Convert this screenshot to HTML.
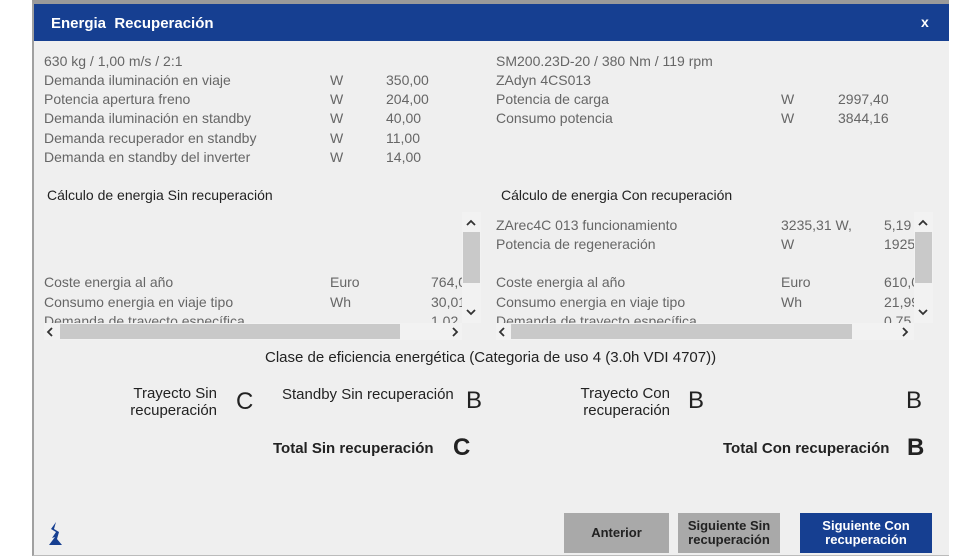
<!DOCTYPE html>
<html><head><meta charset="utf-8"><style>
*{margin:0;padding:0;box-sizing:border-box}
body{width:980px;height:560px;background:#fff;position:relative;overflow:hidden;font-family:"Liberation Sans",sans-serif;font-size:14px;color:#666}
.dlg{position:absolute;left:32px;top:0;width:917px;height:556px;background:#efefef;border-left:2px solid #a0a0a0;border-top:4px solid #9a9a9a;border-bottom:1px solid #bbb}
.hdr{position:absolute;left:34px;top:4px;width:915px;height:37px;background:#163f91;color:#fff;font-weight:bold;font-size:15px}
.t{position:absolute;white-space:nowrap;line-height:16px}
.d{color:#222}
.c{font-size:15px;line-height:17px}
.sb{position:absolute;background:#f2f2f2}
.th{position:absolute;background:#c9c9c9}
.ar{position:absolute}
.btn{position:absolute;display:flex;align-items:center;justify-content:center;text-align:center;font-weight:bold;font-size:13px;line-height:14px;color:#222;background:#a9a9a9}
.clip{position:absolute;overflow:hidden}
</style></head><body>
<div class="dlg"></div>
<div class="hdr"><span class="t" style="left:17px;top:12px">Energia&nbsp; Recuperación</span><span class="t" style="left:887px;top:10px;font-size:14px">x</span></div>

<div class="t" style="left:44px;top:53px">630 kg / 1,00 m/s / 2:1</div>
<div class="t" style="left:44px;top:72px">Demanda iluminación en viaje</div><div class="t" style="left:330px;top:72px">W</div><div class="t" style="left:386px;top:72px">350,00</div>
<div class="t" style="left:44px;top:91px">Potencia apertura freno</div><div class="t" style="left:330px;top:91px">W</div><div class="t" style="left:386px;top:91px">204,00</div>
<div class="t" style="left:44px;top:110px">Demanda iluminación en standby</div><div class="t" style="left:330px;top:110px">W</div><div class="t" style="left:386px;top:110px">40,00</div>
<div class="t" style="left:44px;top:130px">Demanda recuperador en standby</div><div class="t" style="left:330px;top:130px">W</div><div class="t" style="left:386px;top:130px">11,00</div>
<div class="t" style="left:44px;top:149px">Demanda en standby del inverter</div><div class="t" style="left:330px;top:149px">W</div><div class="t" style="left:386px;top:149px">14,00</div>

<div class="t" style="left:496px;top:53px">SM200.23D-20 / 380 Nm / 119 rpm</div>
<div class="t" style="left:496px;top:72px">ZAdyn 4CS013</div>
<div class="t" style="left:496px;top:91px">Potencia de carga</div><div class="t" style="left:781px;top:91px">W</div><div class="t" style="left:838px;top:91px">2997,40</div>
<div class="t" style="left:496px;top:110px">Consumo potencia</div><div class="t" style="left:781px;top:110px">W</div><div class="t" style="left:838px;top:110px">3844,16</div>

<div class="t d" style="left:47px;top:187px">Cálculo de energia Sin recuperación</div>
<div class="t d" style="left:501px;top:187px">Cálculo de energia Con recuperación</div>

<!-- left box -->
<div class="clip" style="left:44px;top:212px;width:418px;height:111px">
<div class="t" style="left:0;top:62px">Coste energia al año</div><div class="t" style="left:286px;top:62px">Euro</div><div class="t" style="left:387px;top:62px">764,05</div>
<div class="t" style="left:0;top:82px">Consumo energia en viaje tipo</div><div class="t" style="left:286px;top:82px">Wh</div><div class="t" style="left:387px;top:82px">30,01</div>
<div class="t" style="left:0;top:101px">Demanda de trayecto específica</div><div class="t" style="left:387px;top:101px">1,02</div>
</div>
<div class="sb" style="left:462px;top:212px;width:19px;height:111px"></div>
<div class="th" style="left:463px;top:232px;width:17px;height:51px"></div>
<svg class="ar" style="left:466px;top:219px" width="10" height="8"><path d="M1 6 L5 2 L9 6" stroke="#333" stroke-width="1.8" fill="none"/></svg>
<svg class="ar" style="left:466px;top:308px" width="10" height="8"><path d="M1 2 L5 6 L9 2" stroke="#333" stroke-width="1.8" fill="none"/></svg>
<div class="sb" style="left:44px;top:323px;width:418px;height:17px"></div>
<div class="th" style="left:60px;top:324px;width:340px;height:15px"></div>
<svg class="ar" style="left:46px;top:327px" width="8" height="10"><path d="M6 1 L2 5 L6 9" stroke="#333" stroke-width="1.8" fill="none"/></svg>
<svg class="ar" style="left:451px;top:327px" width="8" height="10"><path d="M2 1 L6 5 L2 9" stroke="#333" stroke-width="1.8" fill="none"/></svg>

<!-- right box -->
<div class="clip" style="left:496px;top:212px;width:418px;height:111px">
<div class="t" style="left:0;top:5px">ZArec4C 013 funcionamiento</div><div class="t" style="left:285px;top:5px">3235,31 W,</div><div class="t" style="left:388px;top:5px">5,19 kWh</div>
<div class="t" style="left:0;top:24px">Potencia de regeneración</div><div class="t" style="left:285px;top:24px">W</div><div class="t" style="left:388px;top:24px">1925,00</div>
<div class="t" style="left:0;top:62px">Coste energia al año</div><div class="t" style="left:285px;top:62px">Euro</div><div class="t" style="left:388px;top:62px">610,05</div>
<div class="t" style="left:0;top:82px">Consumo energia en viaje tipo</div><div class="t" style="left:285px;top:82px">Wh</div><div class="t" style="left:388px;top:82px">21,99</div>
<div class="t" style="left:0;top:101px">Demanda de trayecto específica</div><div class="t" style="left:388px;top:101px">0,75</div>
</div>
<div class="sb" style="left:914px;top:212px;width:19px;height:111px"></div>
<div class="th" style="left:915px;top:232px;width:17px;height:51px"></div>
<svg class="ar" style="left:918px;top:219px" width="10" height="8"><path d="M1 6 L5 2 L9 6" stroke="#333" stroke-width="1.8" fill="none"/></svg>
<svg class="ar" style="left:918px;top:308px" width="10" height="8"><path d="M1 2 L5 6 L9 2" stroke="#333" stroke-width="1.8" fill="none"/></svg>
<div class="sb" style="left:496px;top:323px;width:418px;height:17px"></div>
<div class="th" style="left:511px;top:324px;width:341px;height:15px"></div>
<svg class="ar" style="left:498px;top:327px" width="8" height="10"><path d="M6 1 L2 5 L6 9" stroke="#333" stroke-width="1.8" fill="none"/></svg>
<svg class="ar" style="left:901px;top:327px" width="8" height="10"><path d="M2 1 L6 5 L2 9" stroke="#333" stroke-width="1.8" fill="none"/></svg>

<div class="t d c" style="left:265px;top:349px">Clase de eficiencia energética (Categoria de uso 4 (3.0h VDI 4707))</div>
<div class="t d c" style="left:97px;top:385px;text-align:right;width:120px">Trayecto Sin<br>recuperación</div>
<div class="t d" style="left:236px;top:390px;font-size:24px;line-height:24px">C</div>
<div class="t d c" style="left:282px;top:386px">Standby Sin recuperación</div>
<div class="t d" style="left:466px;top:389px;font-size:24px;line-height:24px">B</div>
<div class="t d c" style="left:550px;top:385px;text-align:right;width:120px">Trayecto Con<br>recuperación</div>
<div class="t d" style="left:688px;top:389px;font-size:24px;line-height:24px">B</div>
<div class="t d" style="left:906px;top:389px;font-size:24px;line-height:24px">B</div>
<div class="t d c" style="left:273px;top:440px;font-weight:bold">Total Sin recuperación</div>
<div class="t d" style="left:453px;top:436px;font-size:24px;line-height:24px;font-weight:bold">C</div>
<div class="t d c" style="left:723px;top:440px;font-weight:bold">Total Con recuperación</div>
<div class="t d" style="left:907px;top:436px;font-size:24px;line-height:24px;font-weight:bold">B</div>

<svg style="position:absolute;left:44px;top:520px" width="22" height="28" viewBox="0 0 22 28"><path d="M12 2 L7 9 L12 12 L8 18 L11 17 L5 25 L18 25 L13 19 L15 12 L10 9 Z" fill="#163f91"/></svg>

<div class="btn" style="left:564px;top:513px;width:105px;height:40px">Anterior</div>
<div class="btn" style="left:678px;top:513px;width:102px;height:40px">Siguiente Sin<br>recuperación</div>
<div class="btn" style="left:800px;top:513px;width:132px;height:40px;background:#163f91;color:#fff">Siguiente Con<br>recuperación</div>
</body></html>
